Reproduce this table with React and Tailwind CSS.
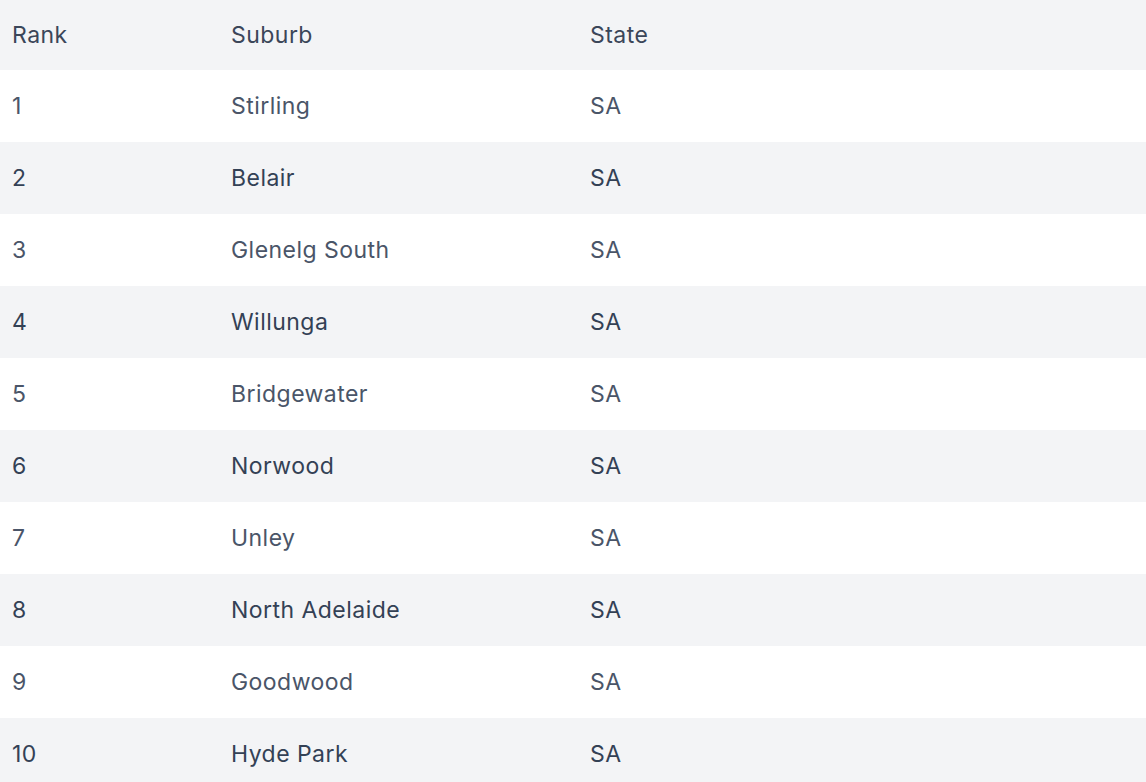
const rows = [
  [1, "Stirling", "SA"],
  [2, "Belair", "SA"],
  [3, "Glenelg South", "SA"],
  [4, "Willunga", "SA"],
  [5, "Bridgewater", "SA"],
  [6, "Norwood", "SA"],
  [7, "Unley", "SA"],
  [8, "North Adelaide", "SA"],
  [9, "Goodwood", "SA"],
  [10, "Hyde Park", "SA"],
]

export default function App() {
  return (
    <div className="min-h-screen bg-white font-['Inter',sans-serif] text-[23px] tracking-[0.02em] text-[#3b4659]">
      <div className="grid grid-cols-[231px_359px_1fr] items-center h-[70px] bg-[#f3f4f6]">
        <div className="pl-3">Rank</div>
        <div>Suburb</div>
        <div>State</div>
      </div>
      {rows.map(([rank, suburb, state], i) => (
        <div
          key={rank}
          className={`grid grid-cols-[231px_359px_1fr] items-center h-[72px] ${i % 2 === 1 ? "bg-[#f3f4f6] text-[#334155]" : "bg-white text-[#4a5568]"}`}
        >
          <div className="pl-3">{rank}</div>
          <div>{suburb}</div>
          <div>{state}</div>
        </div>
      ))}
    </div>
  )
}
